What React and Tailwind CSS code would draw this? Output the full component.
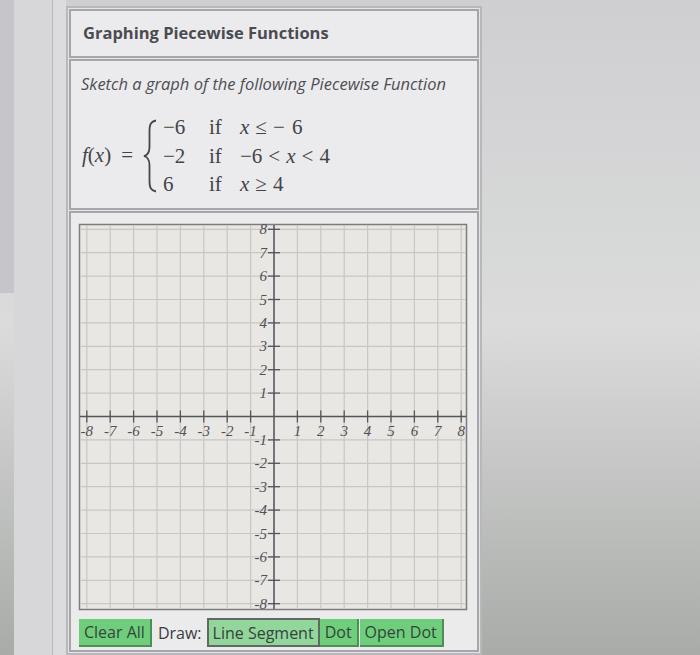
import React from "react";

const U = 23.4;
const OX = 195;
const OY = 192.5;
const W = 388;
const H = 386;
const ticks = [-8, -7, -6, -5, -4, -3, -2, -1, 1, 2, 3, 4, 5, 6, 7, 8];
const lines = [-8, -7, -6, -5, -4, -3, -2, -1, 0, 1, 2, 3, 4, 5, 6, 7, 8];

const Grid = () => (
    <svg width={W} height={H} className="block overflow-visible" style={{ fontFamily: '"Liberation Serif", serif' }}>
        <rect x="0.5" y="0.5" width={W - 1} height={H - 1} fill="#e9e7e3" stroke="#7c7b7d" strokeWidth="1.5" />
        {lines.map((n) => (
            <line key={"v" + n} x1={OX + n * U} y1="1" x2={OX + n * U} y2={H - 1} stroke="#c9c6c3" strokeWidth="1.2" />
        ))}
        {lines.map((n) => (
            <line key={"h" + n} x1="1" y1={OY - n * U} x2={W - 1} y2={OY - n * U} stroke="#c9c6c3" strokeWidth="1.2" />
        ))}
        <line x1="1" y1={OY} x2={W - 1} y2={OY} stroke="#55545a" strokeWidth="1.5" />
        <line x1={OX} y1="1" x2={OX} y2={H - 1} stroke="#55545a" strokeWidth="1.5" />
        {ticks.map((n) => (
            <g key={"t" + n}>
                <line x1={OX + n * U} y1={OY - 6} x2={OX + n * U} y2={OY + 6} stroke="#55545a" strokeWidth="1.3" />
                <text x={OX + n * U} y={OY + 19} textAnchor="middle" fontSize="15" fontStyle="italic" fill="#505055">
                    {n}
                </text>
                <line x1={OX - 6} y1={OY - n * U} x2={OX + 6} y2={OY - n * U} stroke="#55545a" strokeWidth="1.3" />
                <text x={OX - 7} y={OY - n * U + 5} textAnchor="end" fontSize="15" fontStyle="italic" fill="#505055">
                    {n}
                </text>
            </g>
        ))}
    </svg>
);

const Brace = () => (
    <svg width="14" height="74" viewBox="0 0 14 74" className="block">
        <path
            d="M13 1.5 C8 2.5 6.5 5 6.5 12 L6.5 28 C6.5 33 5 36 1 37 C5 38 6.5 41 6.5 46 L6.5 62 C6.5 69 8 71.5 13 72.5"
            fill="none"
            stroke="#46464b"
            strokeWidth="1.8"
        />
    </svg>
);

const Rel = ({ children }) => <span className="mx-[6px]">{children}</span>;

const Formula = () => (
    <div className="flex items-center mt-[18px] ml-[1px] text-[21px] text-[#434348]" style={{ fontFamily: '"Liberation Serif", serif' }}>
        <span>
            <i>f</i>(<i>x</i>)
        </span>
        <span className="ml-[10px]">=</span>
        <div className="ml-[10px]">
            <Brace />
        </div>
        <div className="grid grid-cols-[46px_28px_auto] leading-[28.5px] ml-[6px]">
            <span>−6</span>
            <span>if</span>
            <span className="ml-[3px]">
                <i>x</i>
                <Rel>≤</Rel>− <span className="ml-[2px]">6</span>
            </span>
            <span>−2</span>
            <span>if</span>
            <span className="ml-[3px]">
                −6<Rel>&lt;</Rel>
                <i>x</i>
                <Rel>&lt;</Rel>4
            </span>
            <span>6</span>
            <span>if</span>
            <span className="ml-[3px]">
                <i>x</i>
                <Rel>≥</Rel>4
            </span>
        </div>
    </div>
);

const App = () => {
    return (
        <div
            className="h-[655px] w-[700px] overflow-hidden flex bg-linear-to-b from-[#cfcfd2] via-[#dadbda] to-[#a9aba9]"
            style={{ fontFamily: '"Open Sans", sans-serif' }}
        >
            <div className="w-[14px] h-[293px] bg-[#c6c5ca] shrink-0" />
            <div className="w-[38px] shrink-0 bg-[#d7d6d9]" />
            <div className="w-[14px] shrink-0 bg-[#dcdcde] border-l border-[#b9b9bc]" />
            <div className="w-[416px] shrink-0 border-2 border-[#b8b8bc] bg-[#e4e4e6] mt-[6px] p-[1px] flex flex-col gap-[1px]">
                <div className="h-[49px] border-2 border-[#a5a5aa] bg-[#ebebed] flex items-center pl-[12px]">
                    <span className="text-[16.5px] font-bold text-[#4b4b52]">Graphing Piecewise Functions</span>
                </div>
                <div className="h-[151px] border-2 border-[#a5a5aa] bg-[#ebebed] pt-[12px] pl-[10px]">
                    <div className="text-[16.5px] italic text-[#4e4e54] leading-[22px]">
                        Sketch a graph of the following Piecewise Function
                    </div>
                    <Formula />
                </div>
                <div className="flex-1 border-2 border-[#a5a5aa] bg-[#ebebeb] pt-[11px] pl-[8px]">
                    <Grid />
                    <div className="flex items-center mt-[8px] text-[16px] text-[#34443a]">
                        <button className="h-[28px] px-[5px] bg-[#6fce7c] border-r-2 border-b-2 border-[#4f8d59] leading-none">
                            Clear All
                        </button>
                        <span className="ml-[6px] mr-[5px] text-[#3c3c42]">Draw:</span>
                        <button className="h-[29px] px-[4px] bg-[#92d69c] border-2 border-[#5f6b62] leading-none">
                            Line Segment
                        </button>
                        <button className="h-[28px] px-[5px] bg-[#6fce7c] border-r-2 border-b-2 border-[#4f8d59] leading-none">
                            Dot
                        </button>
                        <button className="h-[28px] px-[5px] ml-[1px] bg-[#6fce7c] border-r-2 border-b-2 border-[#4f8d59] leading-none">
                            Open Dot
                        </button>
                    </div>
                </div>
            </div>
        </div>
    );
};

export default App;
